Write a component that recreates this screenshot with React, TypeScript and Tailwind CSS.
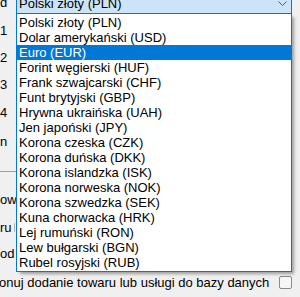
import React from "react";

const currencies = [
    "Polski złoty (PLN)",
    "Dolar amerykański (USD)",
    "Euro (EUR)",
    "Forint węgierski (HUF)",
    "Frank szwajcarski (CHF)",
    "Funt brytyjski (GBP)",
    "Hrywna ukraińska (UAH)",
    "Jen japoński (JPY)",
    "Korona czeska (CZK)",
    "Korona duńska (DKK)",
    "Korona islandzka (ISK)",
    "Korona norweska (NOK)",
    "Korona szwedzka (SEK)",
    "Kuna chorwacka (HRK)",
    "Lej rumuński (RON)",
    "Lew bułgarski (BGN)",
    "Rubel rosyjski (RUB)",
];

export default function App() {
    const selected = 2;

    return (
        <div className="relative w-[300px] h-[297px] overflow-hidden bg-[#f0f0f0] text-[13px] leading-[15px] text-black font-['Liberation_Sans',Arial,sans-serif]">
            {/* Form behind the open list */}
            <div className="flex flex-col">
                <div className="flex mt-[-8px] h-[22px]">
                    <div className="w-[16px] pt-[3px] whitespace-nowrap overflow-hidden">d</div>
                    {/* Combo box */}
                    <div className="flex-1 mr-[8px] flex items-center justify-between border border-[#0078d7] bg-[#cce4f7] pl-[2px] pr-[4px]">
                        <span>Polski złoty (PLN)</span>
                        <svg width="9" height="5" viewBox="0 0 9 5" className="mt-px">
                            <polyline points="0.5,0.5 4.5,4.5 8.5,0.5" fill="none" stroke="#5a5a5a" strokeWidth="1" />
                        </svg>
                    </div>
                </div>

                <div className="flex flex-col w-[16px] whitespace-nowrap">
                    <div className="mt-[9px] h-[15px]">1</div>
                    <div className="mt-[12px] h-[15px]">2</div>
                    <div className="mt-[12px] h-[15px]">3</div>
                    <div className="mt-[13px] h-[15px]">4</div>
                    <div className="mt-[14px] h-[15px]">n</div>
                    <div className="mt-[22px] h-px bg-[#a0a0a0]" />
                    <div className="mt-[20px] h-[15px]">ow</div>
                    <div className="mt-[13px] h-[15px] flex items-center">
                        <span>ru</span>
                        <span className="ml-[2px] w-px h-[9px] bg-[#b4b4b4]" />
                    </div>
                    <div className="mt-[11px] h-[15px]">od</div>
                </div>

                <div className="mt-[14px] h-[15px] flex items-center justify-between pr-[8px] whitespace-nowrap">
                    <span className="-ml-px">onuj dodanie towaru lub usługi do bazy danych</span>
                    <span className="w-[13px] h-[13px] rounded-[2px] border border-[#8a8a8a] bg-[#f6f6f6]" />
                </div>
            </div>

            {/* Open dropdown list */}
            <div className="absolute left-[16px] top-[13px] w-[276px] h-[259px] border border-[#0078d7] bg-white pt-px shadow-[3px_3px_3px_-1px_rgba(0,0,0,0.35)]">
                {currencies.map((c, i) => (
                    <div
                        key={c}
                        className={`h-[15px] pl-[2px] whitespace-nowrap ${i === selected ? "bg-[#0078d7] text-white" : ""}`}
                    >
                        {c}
                    </div>
                ))}
            </div>
        </div>
    );
}
